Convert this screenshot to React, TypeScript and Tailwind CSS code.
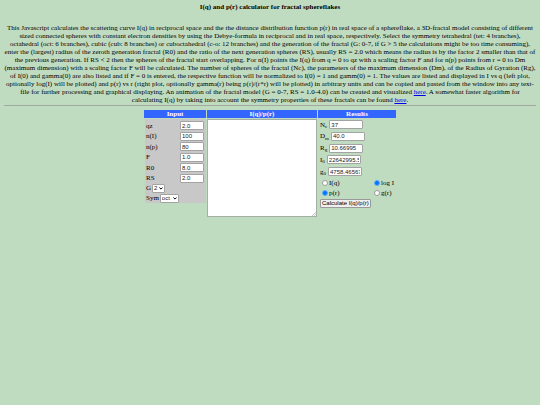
import React from 'react';

const INPUTS = [
  { id: 'qz', label: 'qz', value: '2.0' },
  { id: 'ni', label: 'n(I)', value: '100' },
  { id: 'np', label: 'n(p)', value: '80' },
  { id: 'f', label: 'F', value: '1.0' },
  { id: 'r0', label: 'R0', value: '8.0' },
  { id: 'rs', label: 'RS', value: '2.0' },
];

const RESULTS = [
  { id: 'nc', label: 'N', sub: 'c', value: '37' },
  { id: 'dm', label: 'D', sub: 'm', value: '40.0' },
  { id: 'rg', label: 'R', sub: 'g', value: '10.66995' },
  { id: 'i0', label: 'I', sub: '0', value: '22642995.55' },
  { id: 'g0', label: 'g', sub: '0', value: '4758.465672' },
];

const FIELD =
  "h-[9px] rounded-[1px] border border-[#a3a3a3] bg-white px-px font-['Liberation_Sans',sans-serif] text-[6px] leading-[7px] text-[#222] outline-none";

const HEAD = 'h-[8px] bg-[#3366ff] text-center font-bold leading-[8px] text-white';

type PickProps = { id: string; label: string; options: string[]; value: string; width: string };

const Pick: React.FC<PickProps> = ({ id, label, options, value, width }) => (
  <div className="flex h-[10px] items-center gap-px">
    <label htmlFor={id}>{label}</label>
    <div className={`relative flex ${width}`}>
      <select id={id} defaultValue={value} className={`${FIELD} w-full appearance-none`}>
        {options.map((option) => (
          <option key={option}>{option}</option>
        ))}
      </select>
      <svg viewBox="0 0 10 7" className="pointer-events-none absolute right-[2px] top-[3px] h-[3px] w-[4px]">
        <path d="M1 1l4 4 4-4" fill="none" stroke="#000" strokeWidth="2.5" />
      </svg>
    </div>
  </div>
);

type RadioProps = { name: string; label: string; checked?: boolean };

const Radio: React.FC<RadioProps> = ({ name, label, checked }) => (
  <label className="flex items-center gap-px">
    <input
      type="radio"
      name={name}
      defaultChecked={checked}
      className="size-[6px] shrink-0 appearance-none rounded-full border border-[#9a9a9a] bg-white checked:border-[#6aaaf5] checked:bg-[#0075ff]"
    />
    {label}
  </label>
);

const App: React.FC = () => {
  return (
    <div className="min-h-screen bg-[#c0dcc0] px-1 pt-[3px] font-['Liberation_Serif',serif] text-[7px] leading-[8px] text-black">
      <h1 className="text-center font-bold">I(q) and p(r) calculator for fractal sphereflakes</h1>

      <p className="mt-[13px] text-center">
        This Javascript calculates the scattering curve I(q) in reciprocal space and the the distance distribution
        function p(r) in real space of a sphereflake, a 3D-fractal model consisting of different sized connected spheres
        with constant electron densities by using the Debye-formula in reciprocal and in real space, respectively.
        Select the symmetry tetrahedral (tet: 4 branches), octahedral (oct: 6 branches), cubic (cub: 8 branches) or
        cuboctahedral (c-o: 12 branches) and the generation of the fractal (G: 0-7, if G &gt; 5 the calculations might
        be too time consuming), enter the (largest) radius of the zeroth generation fractal (R0) and the ratio of the
        next generation spheres (RS), usually RS = 2.0 which means the radius is by the factor 2 smaller than that of
        the previous generation. If RS &lt; 2 then the spheres of the fractal start overlapping. For n(I) points the
        I(q) from q = 0 to qz with a scaling factor F and for n(p) points from r = 0 to Dm (maximum dimension) with a
        scaling factor F will be calculated. The number of spheres of the fractal (Nc), the parameters of the maximum
        dimension (Dm), of the Radius of Gyration (Rg), of I(0) and gamma(0) are also listed and if F = 0 is entered,
        the respective function will be normalized to I(0) = 1 and gamm(0) = 1. The values are listed and displayed in I
        vs q (left plot, optionally log(I) will be plotted) and p(r) vs r (right plot, optionally gamma(r) being
        p(r)/(r*r) will be plotted) in arbitrary units and can be copied and pasted from the window into any text-file
        for further processing and graphical displaying. An animation of the fractal model (G = 0-7, RS = 1.0-4.0) can
        be created and visualized <a href="#animation" className="text-[#0000ee] underline">here</a>. A somewhat faster
        algorithm for calculating I(q) by taking into account the symmetry properties of these fractals can be
        found <a href="#faster" className="text-[#0000ee] underline">here</a>.
      </p>

      <hr className="mt-px border-[#a0a8a0]" />

      <form className="mx-auto mt-1 flex w-max gap-px">
        <section className="w-[62px]">
          <h2 className={HEAD}>Input</h2>
          <div className="ml-px mt-px bg-[#c8c8c8] pl-px pr-[2px]">
            <div className="flex h-[64px] flex-col justify-between pt-[2px]">
              {INPUTS.map((field) => (
                <div key={field.id} className="flex items-center justify-between">
                  <label htmlFor={field.id}>{field.label}</label>
                  <input id={field.id} defaultValue={field.value} className={`${FIELD} w-[24px]`} />
                </div>
              ))}
            </div>
            <Pick id="generation" label="G" options={['0', '1', '2', '3', '4', '5', '6', '7']} value="2" width="w-[13px]" />
            <Pick id="symmetry" label="Sym" options={['tet', 'oct', 'cub', 'c-o']} value="oct" width="w-[19px]" />
          </div>
        </section>

        <section className="w-[110px]">
          <h2 className={HEAD}>I(q)/p(r)</h2>
          <div className="relative mt-px flex">
            <textarea
              aria-label="I(q)/p(r)"
              className="h-[98px] w-full resize-none border border-[#a3b0a3] bg-white text-[6px] outline-none"
            />
            <svg viewBox="0 0 6 6" className="pointer-events-none absolute bottom-px right-px size-[4px]">
              <path d="M0 6L6 0M3 6l3-3" stroke="#888" strokeWidth="0.7" />
            </svg>
          </div>
        </section>

        <section className="w-[78px]">
          <h2 className={HEAD}>Results</h2>
          <div className="pl-[2px] pt-[2px]">
            <div className="flex h-[56px] flex-col justify-between">
              {RESULTS.map((field) => (
                <div key={field.id} className="flex items-center gap-[2px]">
                  <label htmlFor={field.id} className="whitespace-nowrap">
                    {field.label}
                    <sub className="text-[5px] leading-none">{field.sub}</sub>
                  </label>
                  <input id={field.id} defaultValue={field.value} className={`${FIELD} w-[34px]`} />
                </div>
              ))}
            </div>
            <div className="mt-[3px] grid grid-cols-[52px_auto] gap-y-[2px] pl-[2px]">
              <Radio name="curve" label="I(q)" />
              <Radio name="plot" label="log I" checked />
              <Radio name="curve" label="p(r)" checked />
              <Radio name="plot" label="g(r)" />
            </div>
            <button
              type="button"
              className="mt-[2px] block h-[9px] whitespace-nowrap rounded-[1px] border border-[#999] bg-[#efefef] px-px font-['Liberation_Sans',sans-serif] text-[6px] leading-[7px]"
            >
              Calculate I(q)/p(r)
            </button>
          </div>
        </section>
      </form>
    </div>
  );
};

export default App;
